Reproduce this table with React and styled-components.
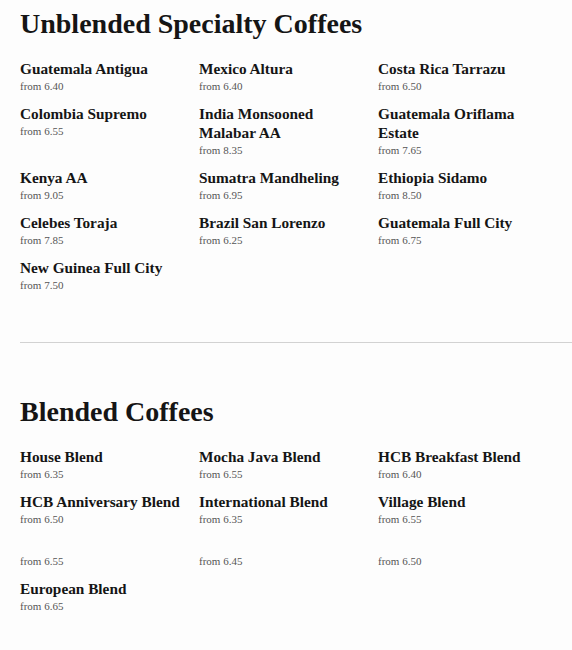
import styled, { createGlobalStyle } from "styled-components";

const GlobalStyle = createGlobalStyle`
  body {
    margin: 0;
    background: #fdfdfd;
    font-family: "Liberation Serif", "Times New Roman", serif;
    color: #111;
  }
`;

const unblended = [
  { name: "Guatemala Antigua", price: "6.40" },
  { name: "Mexico Altura", price: "6.40" },
  { name: "Costa Rica Tarrazu", price: "6.50" },
  { name: "Colombia Supremo", price: "6.55" },
  { name: "India Monsooned Malabar AA", price: "8.35" },
  { name: "Guatemala Oriflama Estate", price: "7.65" },
  { name: "Kenya AA", price: "9.05" },
  { name: "Sumatra Mandheling", price: "6.95" },
  { name: "Ethiopia Sidamo", price: "8.50" },
  { name: "Celebes Toraja", price: "7.85" },
  { name: "Brazil San Lorenzo", price: "6.25" },
  { name: "Guatemala Full City", price: "6.75" },
  { name: "New Guinea Full City", price: "7.50" },
];

const blended = [
  { name: "House Blend", price: "6.35" },
  { name: "Mocha Java Blend", price: "6.55" },
  { name: "HCB Breakfast Blend", price: "6.40" },
  { name: "HCB Anniversary Blend", price: "6.50" },
  { name: "International Blend", price: "6.35" },
  { name: "Village Blend", price: "6.55" },
  { name: "", price: "6.55" },
  { name: "", price: "6.45" },
  { name: "", price: "6.50" },
  { name: "European Blend", price: "6.65" },
];

const Page = styled.main`
  padding: 7px 0 40px 20px;
`;

const Section = styled.section`
  display: flex;
  flex-direction: column;
`;

const Heading = styled.h1`
  margin: 0 0 18px;
  font-size: 28px;
  line-height: 34px;
  font-weight: bold;
  color: #151515;
`;

const Grid = styled.div`
  display: grid;
  grid-template-columns: repeat(3, 179px);
  row-gap: 10px;
`;

const Item = styled.div`
  display: flex;
  flex-direction: column;
`;

const Name = styled.h3`
  margin: 0;
  font-size: 15.3px;
  line-height: 19px;
  font-weight: bold;
  color: #151515;
  padding-right: 6px;
  height: ${(p) => (p.$empty ? "16px" : "auto")};
`;

const Price = styled.span`
  font-size: 11px;
  line-height: 16px;
  color: #555;
`;

const Divider = styled.hr`
  border: 0;
  border-top: 1px solid #d2d2d2;
  margin: 49px 0 52px;
`;

function Menu({ title, items }) {
  return (
    <Section>
      <Heading>{title}</Heading>
      <Grid>
        {items.map((c, i) => (
          <Item key={i}>
            <Name $empty={!c.name}>{c.name}</Name>
            <Price>from {c.price}</Price>
          </Item>
        ))}
      </Grid>
    </Section>
  );
}

export default function App() {
  return (
    <Page>
      <GlobalStyle />
      <Menu title="Unblended Specialty Coffees" items={unblended} />
      <Divider />
      <Menu title="Blended Coffees" items={blended} />
    </Page>
  );
}
